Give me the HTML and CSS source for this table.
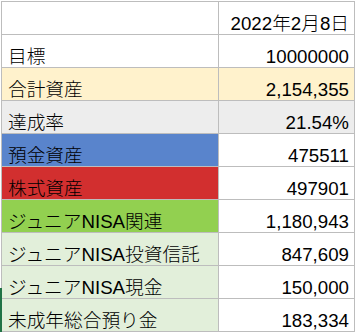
FILE: index.html
```html
<!DOCTYPE html>
<html lang="ja">
<head>
<meta charset="utf-8">
<link rel="stylesheet" href="styles.css">
</head>
<body>
<div class="sheet">
  <div class="cell"></div><div class="cell num">2022年2月8日</div>
  <div class="cell">目標</div><div class="cell num">10000000</div>
  <div class="cell yellow">合計資産</div><div class="cell num yellow">2,154,355</div>
  <div class="cell gray">達成率</div><div class="cell num gray">21.54%</div>
  <div class="cell blue">預金資産</div><div class="cell num">475511</div>
  <div class="cell red">株式資産</div><div class="cell num">497901</div>
  <div class="cell lime">ジュニアNISA関連</div><div class="cell num">1,180,943</div>
  <div class="cell mint">ジュニアNISA投資信託</div><div class="cell num">847,609</div>
  <div class="cell mint">ジュニアNISA現金</div><div class="cell num">150,000</div>
  <div class="cell mint">未成年総合預り金</div><div class="cell num">183,334</div>
  <div class="marker"></div>
</div>
</body>
</html>
```
FILE: styles.css
```css
html, body {
  margin: 0;
  padding: 0;
  background: #ffffff;
}
.sheet {
  position: relative;
  margin: 1px 0 0 1px;
  width: 352px;
  display: grid;
  grid-template-columns: 216px 135px;
  grid-auto-rows: 32px;
  gap: 1px;
  padding: 1px;
  background: #bdbdbd;
  font-family: "Liberation Sans", "Noto Sans CJK JP", sans-serif;
  font-size: 18.7px;
  font-weight: 300;
  color: #000000;
}
.cell {
  background: #ffffff;
  display: flex;
  align-items: flex-end;
  line-height: 20px;
  padding: 0 0 0 6px;
  white-space: nowrap;
  overflow: hidden;
}
.num {
  justify-content: flex-end;
  padding: 0 5px 0 0;
}
.yellow { background: #fff2cc; }
.gray { background: #ededed; }
.blue { background: #5984cc; }
.red { background: #d22f2f; }
.lime { background: #92d050; }
.mint { background: #e2efda; }
.marker {
  position: absolute;
  left: -1px;
  top: 287px;
  width: 2px;
  height: 44px;
  background: #217346;
}
```
